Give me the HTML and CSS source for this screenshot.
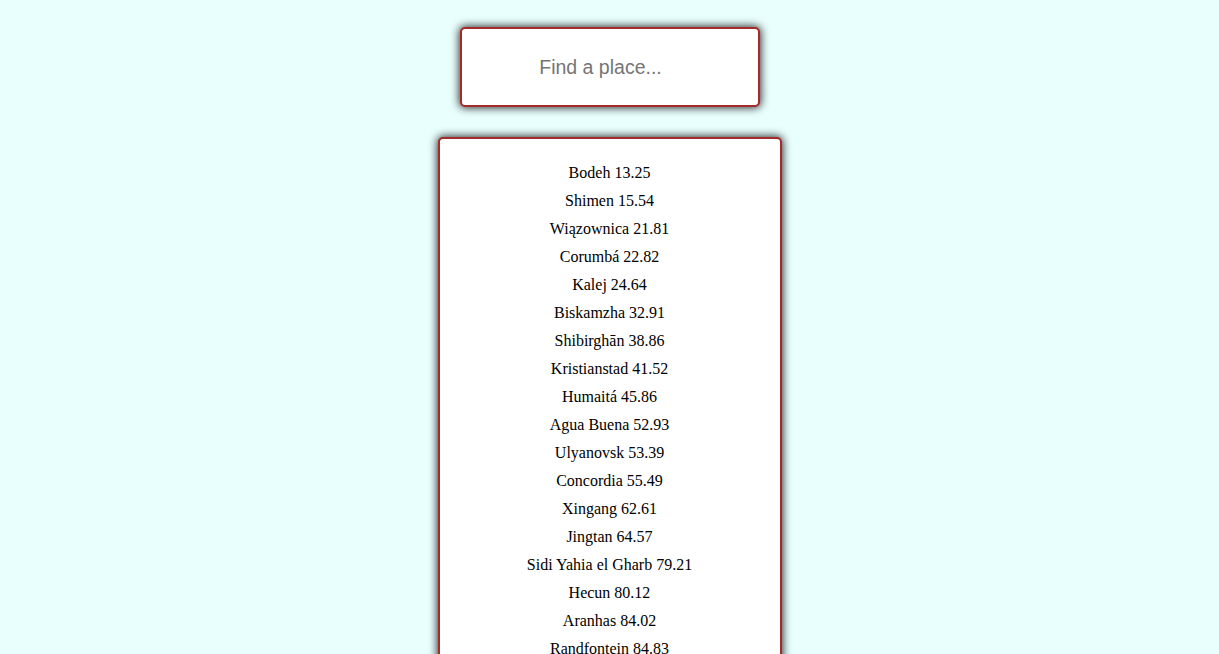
FILE: index.html
```html
<!DOCTYPE html>
<html>
<head>
<meta charset="utf-8">
<link rel="stylesheet" href="styles.css">
</head>
<body>
<main class="page">
  <input class="search" type="text" placeholder="Find a place...">
  <ul class="results">
    <li>Bodeh 13.25</li>
    <li>Shimen 15.54</li>
    <li>Wiązownica 21.81</li>
    <li>Corumbá 22.82</li>
    <li>Kalej 24.64</li>
    <li>Biskamzha 32.91</li>
    <li>Shibirghān 38.86</li>
    <li>Kristianstad 41.52</li>
    <li>Humaitá 45.86</li>
    <li>Agua Buena 52.93</li>
    <li>Ulyanovsk 53.39</li>
    <li>Concordia 55.49</li>
    <li>Xingang 62.61</li>
    <li>Jingtan 64.57</li>
    <li>Sidi Yahia el Gharb 79.21</li>
    <li>Hecun 80.12</li>
    <li>Aranhas 84.02</li>
    <li>Randfontein 84.83</li>
    <li>Lautoka 88.10</li>
    <li>Tawau 91.47</li>
  </ul>
</main>
</body>
</html>
```
FILE: styles.css
```css
html, body {
  margin: 0;
  padding: 0;
  background: #e8fffe;
}
.page {
  display: flex;
  flex-direction: column;
  align-items: center;
  padding-top: 27px;
  gap: 30px;
  font-family: "Liberation Serif", "Times New Roman", serif;
}
.search {
  box-sizing: border-box;
  width: 300px;
  height: 80px;
  border: 2px solid #a52a2a;
  border-radius: 5px;
  background: #fff;
  box-shadow: 0 0 9px 1px rgba(0, 0, 0, 0.8);
  font-family: "Liberation Sans", Arial, sans-serif;
  font-size: 19.5px;
  text-align: center;
  outline: none;
  padding: 0 18px 0 0;
  color: #333;
}
.search::placeholder {
  color: #757575;
}
.results {
  box-sizing: border-box;
  width: 344px;
  margin: 0;
  padding: 20px 0;
  list-style: none;
  border: 2px solid #a52a2a;
  border-radius: 5px;
  background: #fff;
  box-shadow: 0 0 9px 1px rgba(0, 0, 0, 0.8);
  text-align: center;
  font-size: 16px;
  color: #000;
}
.results li {
  line-height: 28px;
  height: 28px;
}
```
